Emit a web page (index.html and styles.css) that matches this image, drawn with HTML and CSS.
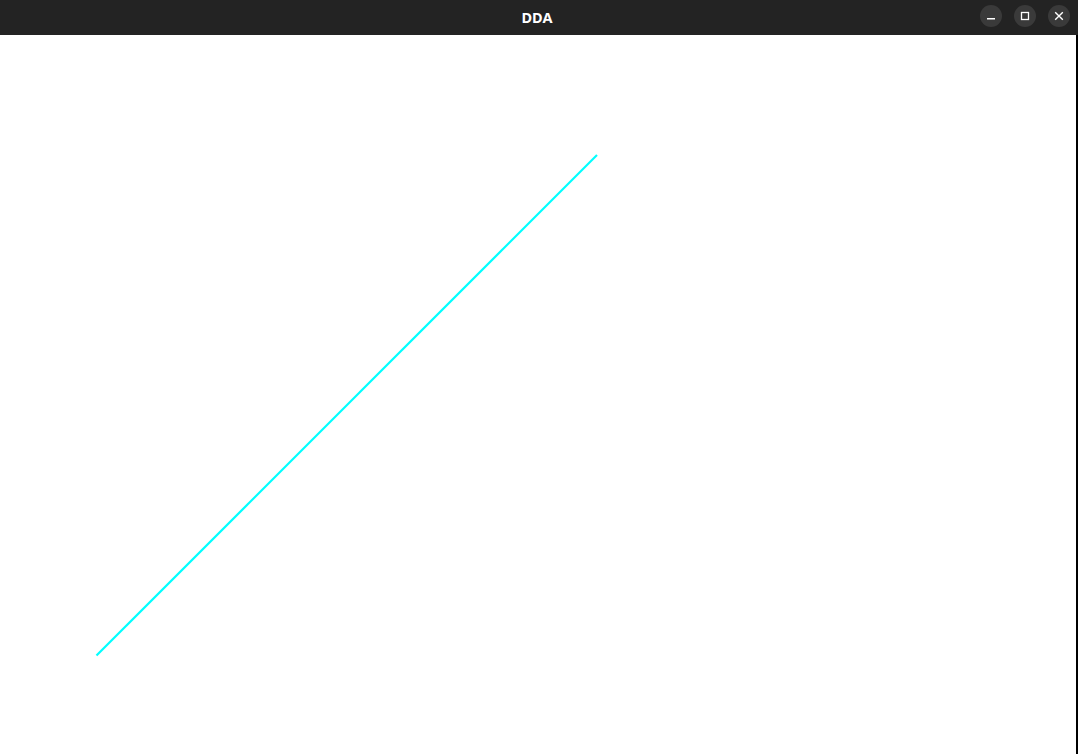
FILE: index.html
```html
<!DOCTYPE html>
<html>
<head>
<meta charset="utf-8">
<title>DDA</title>
<link rel="stylesheet" href="styles.css">
</head>
<body>
<div class="window">
  <header class="titlebar">
    <div class="title">DDA</div>
    <div class="controls">
      <button class="ctrl" aria-label="Minimize">
        <svg width="10" height="10" viewBox="0 0 10 10"><rect x="1" y="7" width="8" height="1.5" fill="#ffffff"/></svg>
      </button>
      <button class="ctrl" aria-label="Maximize">
        <svg width="10" height="10" viewBox="0 0 10 10"><rect x="1.5" y="1.5" width="7" height="7" fill="none" stroke="#ffffff" stroke-width="1.3"/></svg>
      </button>
      <button class="ctrl" aria-label="Close">
        <svg width="10" height="10" viewBox="0 0 10 10"><path d="M1.2 1.2 L8.8 8.8 M8.8 1.2 L1.2 8.8" stroke="#ffffff" stroke-width="1.4" fill="none"/></svg>
      </button>
    </div>
  </header>
  <main class="content">
    <div class="canvas">
      <svg class="drawing" width="1076" height="719" viewBox="0 0 1076 719">
        <line x1="96.5" y1="620.5" x2="597" y2="120" stroke="#00ffff" stroke-width="2.2"/>
      </svg>
    </div>
    <div class="edge"></div>
  </main>
</div>
</body>
</html>
```
FILE: styles.css
```css
html, body {
  margin: 0;
  padding: 0;
  width: 1078px;
  height: 754px;
  overflow: hidden;
  background: #232323;
  font-family: "Noto Sans", "DejaVu Sans", sans-serif;
}

.window {
  display: flex;
  flex-direction: column;
  width: 1078px;
  height: 754px;
}

.titlebar {
  position: relative;
  height: 35px;
  flex: 0 0 35px;
  background: #232323;
  display: flex;
  align-items: center;
  justify-content: flex-end;
  padding-right: 8px;
  box-sizing: border-box;
}

.title {
  position: absolute;
  left: 0;
  right: 0;
  top: 0;
  height: 35px;
  line-height: 34px;
  text-align: center;
  color: #ffffff;
  font-weight: 700;
  font-size: 14.5px;
  padding-right: 4px;
}

.controls {
  display: flex;
  gap: 12px;
  position: relative;
  margin-top: -3px;
}

.ctrl {
  width: 22px;
  height: 22px;
  border: none;
  border-radius: 50%;
  background: #3a3a3a;
  padding: 0;
  display: flex;
  align-items: center;
  justify-content: center;
}

.ctrl svg {
  display: block;
}

.content {
  flex: 1;
  display: flex;
}

.canvas {
  flex: 1;
  background: #ffffff;
}

.drawing {
  display: block;
}

.edge {
  width: 2px;
  background: #000000;
}
```
